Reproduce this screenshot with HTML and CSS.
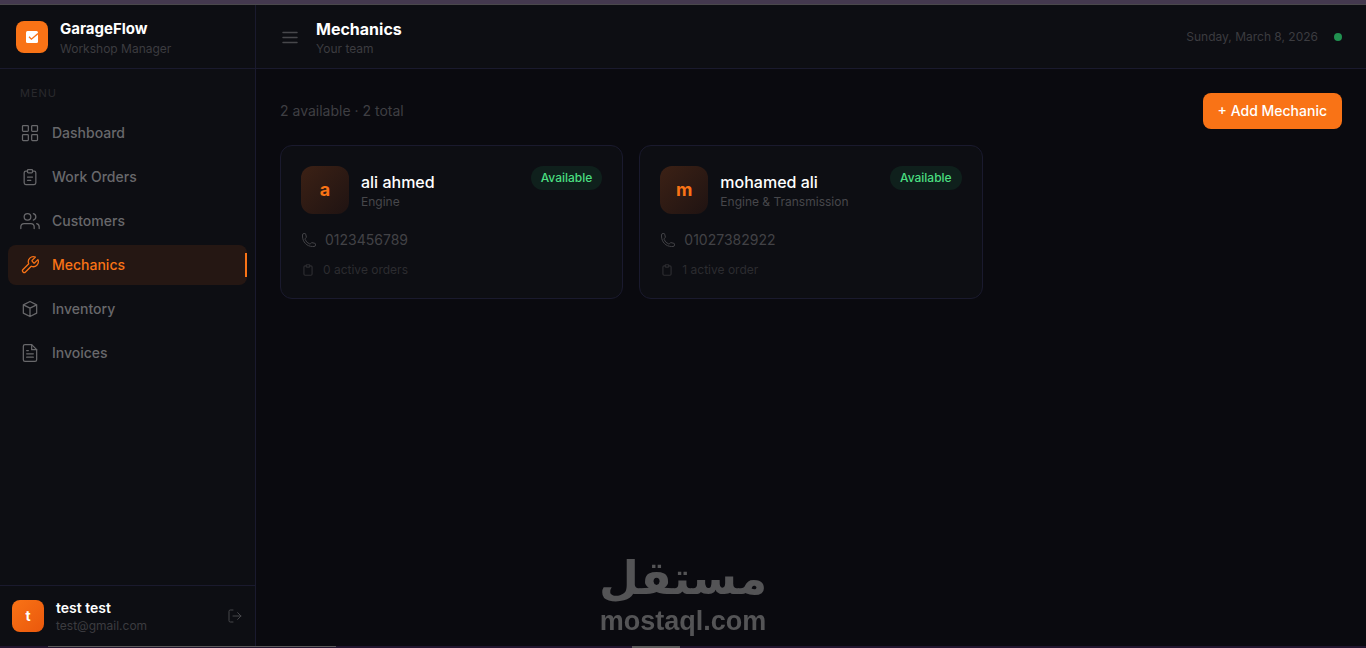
FILE: index.html
```
<!DOCTYPE html>
<html lang="en">
<head>
  <meta charset="UTF-8">
  <meta name="viewport" content="width=device-width, initial-scale=1">
  <title>GarageFlow - Mechanics</title>
  <link rel="stylesheet" href="styles.css">
</head>
<body>
  <div class="strip-top"></div>
  <div class="app">
    <aside class="sidebar">
      <div class="brand">
        <div class="brand-icon">
          <svg width="12" height="12" viewBox="0 0 12 12"><rect width="12" height="12" rx="1.5" fill="#fff"/><path d="M3 5.8l2.4 2.4L12 2.6" fill="none" stroke="#f97316" stroke-width="1.3"/></svg>
        </div>
        <div>
          <div class="brand-name">GarageFlow</div>
          <div class="sub">Workshop Manager</div>
        </div>
      </div>

      <nav class="menu">
        <div class="menu-label">MENU</div>
        <a href="#" class="menu-item">
          <svg class="icon" viewBox="0 0 24 24"><rect x="3" y="3" width="7" height="7" rx="1"/><rect x="14" y="3" width="7" height="7" rx="1"/><rect x="3" y="14" width="7" height="7" rx="1"/><rect x="14" y="14" width="7" height="7" rx="1"/></svg>
          Dashboard
        </a>
        <a href="#" class="menu-item">
          <svg class="icon" viewBox="0 0 24 24"><path d="M9 5H7a2 2 0 0 0-2 2v12a2 2 0 0 0 2 2h10a2 2 0 0 0 2-2V7a2 2 0 0 0-2-2h-2"/><rect x="9" y="3" width="6" height="4" rx="1"/><path d="M9 12h6M9 16h4"/></svg>
          Work Orders
        </a>
        <a href="#" class="menu-item">
          <svg class="icon" viewBox="0 0 24 24"><path d="M17 21v-2a4 4 0 0 0-4-4H5a4 4 0 0 0-4 4v2"/><circle cx="9" cy="7" r="4"/><path d="M23 21v-2a4 4 0 0 0-3-3.87M16 3.13a4 4 0 0 1 0 7.75"/></svg>
          Customers
        </a>
        <a href="#" class="menu-item active">
          <svg class="icon" viewBox="0 0 24 24"><path d="M14.7 6.3a1 1 0 0 0 0 1.4l1.6 1.6a1 1 0 0 0 1.4 0l3.77-3.77a6 6 0 0 1-7.94 7.94l-6.91 6.91a2.12 2.12 0 0 1-3-3l6.91-6.91a6 6 0 0 1 7.94-7.94l-3.76 3.76z"/></svg>
          Mechanics
        </a>
        <a href="#" class="menu-item">
          <svg class="icon" viewBox="0 0 24 24"><path d="M20 7l-8-4-8 4m16 0l-8 4m8-4v10l-8 4m0-10L4 7m8 4v10M4 7v10l8 4"/></svg>
          Inventory
        </a>
        <a href="#" class="menu-item">
          <svg class="icon" viewBox="0 0 24 24"><path d="M14 2H6a2 2 0 0 0-2 2v16a2 2 0 0 0 2 2h12a2 2 0 0 0 2-2V8z"/><path d="M14 2v6h6M16 13H8M16 17H8M10 9H8"/></svg>
          Invoices
        </a>
      </nav>

      <div class="user">
        <div class="user-avatar">t</div>
        <div class="user-info">
          <div class="user-name">test test</div>
          <div class="sub">test@gmail.com</div>
        </div>
        <button class="icon-btn" aria-label="Log out">
          <svg class="icon small" viewBox="0 0 24 24"><path d="M9 21H5a2 2 0 0 1-2-2V5a2 2 0 0 1 2-2h4M16 17l5-5-5-5M21 12H9"/></svg>
        </button>
      </div>
    </aside>

    <div class="content">
      <header class="topbar">
        <button class="icon-btn" aria-label="Toggle menu">
          <svg class="icon" viewBox="0 0 20 20"><path d="M3 5.5h14M3 10.5h14M3 15.5h14"/></svg>
        </button>
        <div class="page-title">
          <h1>Mechanics</h1>
          <div class="sub">Your team</div>
        </div>
        <span class="date">Sunday, March 8, 2026</span>
        <span class="dot"></span>
      </header>

      <main>
        <div class="toolbar">
          <p>2 available · 2 total</p>
          <button class="add-btn">+ Add Mechanic</button>
        </div>

        <div class="cards">
          <article class="card">
            <div class="card-head">
              <div class="avatar">a</div>
              <div class="who">
                <h2>ali ahmed</h2>
                <div class="skill">Engine</div>
              </div>
              <span class="badge">Available</span>
            </div>
            <div class="phone">
              <svg class="icon small" viewBox="0 0 24 24"><path d="M2.25 6.75c0 8.284 6.716 15 15 15h2.25a2.25 2.25 0 0 0 2.25-2.25v-1.372c0-.516-.351-.966-.852-1.091l-4.423-1.106c-.44-.11-.902.055-1.173.417l-.97 1.293c-.282.376-.769.542-1.21.38a12.035 12.035 0 0 1-7.143-7.143c-.162-.441.004-.928.38-1.21l1.293-.97c.363-.271.527-.734.417-1.173L6.963 3.102a1.125 1.125 0 0 0-1.091-.852H4.5A2.25 2.25 0 0 0 2.25 4.5v2.25z"/></svg>
              0123456789
            </div>
            <div class="orders">
              <svg class="icon tiny" viewBox="0 0 24 24"><path d="M9 5H7a2 2 0 0 0-2 2v12a2 2 0 0 0 2 2h10a2 2 0 0 0 2-2V7a2 2 0 0 0-2-2h-2"/><rect x="9" y="3" width="6" height="4" rx="1"/></svg>
              0 active orders
            </div>
          </article>

          <article class="card">
            <div class="card-head">
              <div class="avatar">m</div>
              <div class="who">
                <h2>mohamed ali</h2>
                <div class="skill">Engine &amp; Transmission</div>
              </div>
              <span class="badge">Available</span>
            </div>
            <div class="phone">
              <svg class="icon small" viewBox="0 0 24 24"><path d="M2.25 6.75c0 8.284 6.716 15 15 15h2.25a2.25 2.25 0 0 0 2.25-2.25v-1.372c0-.516-.351-.966-.852-1.091l-4.423-1.106c-.44-.11-.902.055-1.173.417l-.97 1.293c-.282.376-.769.542-1.21.38a12.035 12.035 0 0 1-7.143-7.143c-.162-.441.004-.928.38-1.21l1.293-.97c.363-.271.527-.734.417-1.173L6.963 3.102a1.125 1.125 0 0 0-1.091-.852H4.5A2.25 2.25 0 0 0 2.25 4.5v2.25z"/></svg>
              01027382922
            </div>
            <div class="orders">
              <svg class="icon tiny" viewBox="0 0 24 24"><path d="M9 5H7a2 2 0 0 0-2 2v12a2 2 0 0 0 2 2h10a2 2 0 0 0 2-2V7a2 2 0 0 0-2-2h-2"/><rect x="9" y="3" width="6" height="4" rx="1"/></svg>
              1 active order
            </div>
          </article>
        </div>
      </main>
    </div>
  </div>
  <div class="strip-bottom"></div>

  <div class="watermark">
    <div class="watermark-ar" lang="ar" dir="rtl">مستقل</div>
    <div class="watermark-en">mostaql.com</div>
  </div>
</body>
</html>
```
FILE: styles.css
```
* {
  box-sizing: border-box;
}
body {
  margin: 0;
  min-height: 100vh;
  display: flex;
  flex-direction: column;
  background: #0a0a0f;
  color: #fff;
  font-family: Inter, sans-serif;
  font-size: 14px;
  line-height: 20px;
}
h1, h2, p {
  margin: 0;
}
button {
  font-family: inherit;
  border: none;
  cursor: pointer;
}
.strip-top {
  height: 5px;
  background: #44394f;
  border-bottom: 1px solid #4a484c;
}
.strip-bottom {
  height: 2px;
  background: linear-gradient(#5c5a5c, #5c5a5c) 48px 0 / 288px 1px no-repeat,
    linear-gradient(#5c5a5c, #5c5a5c) 632px 0 / 48px 2px no-repeat,
    #21162f;
}
.app {
  flex: 1;
  display: flex;
}

/* icons */
.icon {
  width: 20px;
  height: 20px;
  flex-shrink: 0;
  fill: none;
  stroke: currentColor;
  stroke-width: 1.5;
  stroke-linecap: round;
  stroke-linejoin: round;
}
.small {
  width: 16px;
  height: 16px;
}
.tiny {
  width: 14px;
  height: 14px;
  stroke-width: 2;
}
.icon-btn {
  display: flex;
  padding: 0;
  background: none;
  color: #47474b;
}

/* sidebar */
.sidebar {
  width: 256px;
  flex-shrink: 0;
  display: flex;
  flex-direction: column;
  background: #0d0e13;
  border-right: 1px solid #1a1a2e;
}
.brand {
  height: 64px;
  display: flex;
  align-items: center;
  gap: 12px;
  padding: 0 16px;
  border-bottom: 1px solid #1a1a2e;
}
.brand-icon {
  width: 32px;
  height: 32px;
  border-radius: 8px;
  background: #f97316;
  display: flex;
  align-items: center;
  justify-content: center;
}
.brand-name {
  font-size: 15px;
  font-weight: 700;
  line-height: 24px;
}
h1 {
  font-size: 16px;
  font-weight: 700;
  line-height: 24px;
}
.sub {
  font-size: 12px;
  line-height: 16px;
  color: #3c3c40;
}
.menu {
  flex: 1;
  display: flex;
  flex-direction: column;
  gap: 4px;
  padding: 16px 8px;
}
.menu-label {
  padding: 0 12px;
  margin-bottom: 8px;
  font-size: 11px;
  line-height: 16px;
  letter-spacing: 1px;
  color: #29292d;
}
.menu-item {
  height: 40px;
  display: flex;
  align-items: center;
  gap: 12px;
  padding: 0 12px;
  border-radius: 8px;
  color: #68686b;
  font-weight: 500;
  text-decoration: none;
}
.menu-item.active {
  background: #251713;
  color: #f97316;
}
.menu-item.active::after {
  content: "";
  width: 2px;
  height: 24px;
  margin-left: auto;
  margin-right: -12px;
  background: #f97316;
}
.user {
  display: flex;
  align-items: center;
  gap: 12px;
  padding: 12px;
  border-top: 1px solid #1a1a2e;
}
.user-avatar {
  width: 32px;
  height: 32px;
  border-radius: 8px;
  background: linear-gradient(135deg, #f97316, #ea580c);
  display: flex;
  align-items: center;
  justify-content: center;
  font-weight: 700;
}
.user-info {
  flex: 1;
}
.user-name {
  font-weight: 600;
}

/* top bar */
.content {
  flex: 1;
  display: flex;
  flex-direction: column;
}
.topbar {
  height: 64px;
  display: flex;
  align-items: center;
  gap: 16px;
  padding: 0 24px;
  background: #0d0e13;
  border-bottom: 1px solid #1a1a2e;
}
.page-title {
  flex: 1;
}
.date {
  font-size: 12px;
  color: #3c3c40;
}
.dot {
  width: 8px;
  height: 8px;
  border-radius: 50%;
  background: #219150;
}

/* mechanics list */
main {
  padding: 24px;
}
.toolbar {
  display: flex;
  align-items: center;
  justify-content: space-between;
  margin-bottom: 16px;
  color: #3f3f43;
}
.add-btn {
  padding: 8px 15px;
  border-radius: 8px;
  background: #f97316;
  color: #fff;
  font-size: 14px;
  font-weight: 500;
  line-height: 20px;
}
.cards {
  display: grid;
  grid-template-columns: repeat(3, 1fr);
  gap: 16px;
}
.card {
  padding: 20px;
  background: #0d0e13;
  border: 1px solid #1a1a2e;
  border-radius: 12px;
}
.card-head {
  display: flex;
  align-items: flex-start;
  gap: 12px;
  margin-bottom: 16px;
}
.avatar {
  width: 48px;
  height: 48px;
  border-radius: 12px;
  background: linear-gradient(135deg, #3c2115, #1f1312);
  display: flex;
  align-items: center;
  justify-content: center;
  color: #f97316;
  font-size: 18px;
  font-weight: 700;
}
.who {
  flex: 1;
  padding-top: 4px;
}
h2 {
  font-size: 16px;
  font-weight: 500;
  line-height: 24px;
}
.skill {
  font-size: 12px;
  line-height: 16px;
  color: #47474b;
}
.badge {
  padding: 4px 10px;
  border-radius: 12px;
  background: #0f201c;
  color: #4ade80;
  font-size: 12px;
  font-weight: 500;
  line-height: 16px;
}
.phone, .orders {
  display: flex;
  align-items: center;
  gap: 8px;
}
.phone {
  margin-bottom: 12px;
  color: #424246;
}
.orders {
  font-size: 12px;
  line-height: 16px;
  color: #2c2c30;
}

.watermark {
  position: fixed;
  left: 0;
  right: 0;
  bottom: 12px;
  color: #545456;
  font-weight: 700;
  text-align: center;
  pointer-events: none;
}
.watermark-ar {
  font-family: "DejaVu Sans", sans-serif;
  font-size: 46px;
  line-height: 56px;
}
.watermark-en {
  font-family: "Liberation Sans", Arial, sans-serif;
  font-size: 27px;
  line-height: 30px;
}
```
